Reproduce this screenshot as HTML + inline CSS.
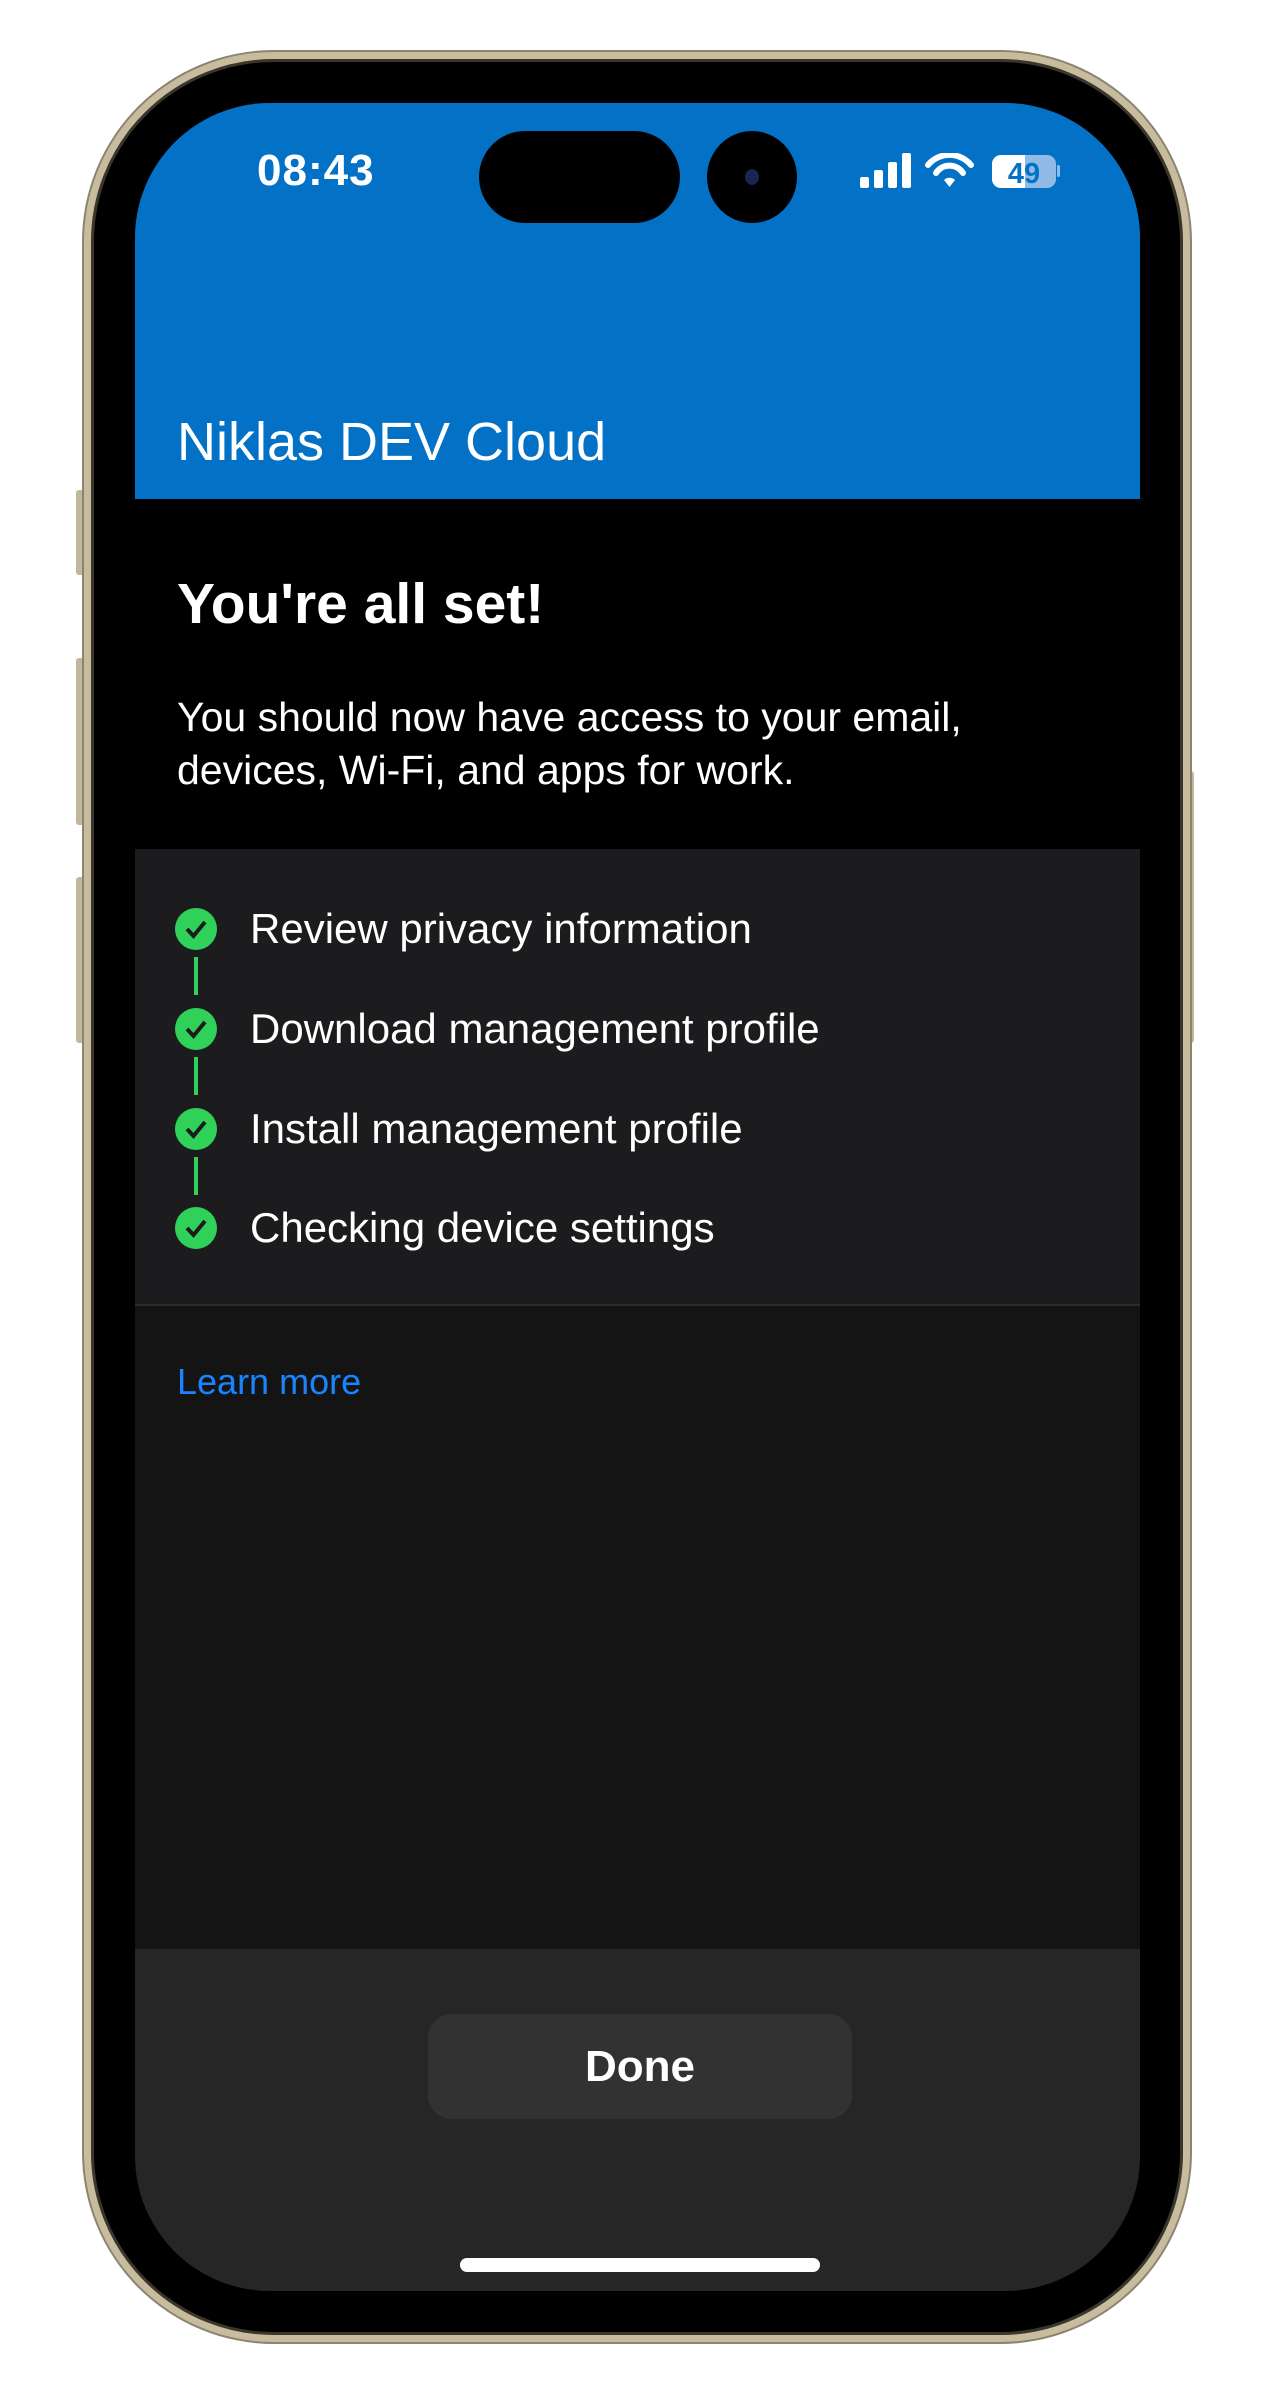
<!DOCTYPE html>
<html><head><meta charset="utf-8"><style>
*{margin:0;padding:0;box-sizing:border-box}
body{width:1270px;height:2383px;background:#fff;position:relative;overflow:hidden;font-family:"Liberation Sans",sans-serif}
.frame{position:absolute;left:84px;top:52px;width:1106px;height:2290px;border-radius:190px;background:#000;border:7px solid #c8bc9e;box-shadow:0 0 0 2px #8c8470,inset 0 0 0 3px #3a362c}
.btn{position:absolute;background:#c2b79b;border-radius:3px;width:8px}
.screen{position:absolute;left:135px;top:103px;width:1005px;height:2188px;border-radius:135px;overflow:hidden;background:#262626}
.hdr{position:absolute;left:0;top:0;width:100%;height:396px;background:#0372c6}
.time{position:absolute;left:122px;top:43px;color:#fff;font-size:44px;font-weight:bold;letter-spacing:1px}
.island{position:absolute;left:344px;top:28px;width:201px;height:92px;background:#000;border-radius:46px}
.cam{position:absolute;left:572px;top:28px;width:90px;height:92px;background:#000;border-radius:50%}
.cam:after{content:"";position:absolute;left:38px;top:38px;width:14px;height:16px;border-radius:50%;background:#1b2350}
.title{position:absolute;left:42px;top:304px;color:#fff;font-size:54px;line-height:70px}
.set{position:absolute;left:0;top:396px;width:100%;height:350px;background:#000}
.set h1{position:absolute;left:42px;top:72px;color:#fff;font-size:57px;font-weight:bold}
.set p{position:absolute;left:42px;top:192px;color:#fff;font-size:41px;line-height:53px;width:900px}
.list{position:absolute;left:0;top:746px;width:100%;height:457px;background:#1c1c1e;border-bottom:2px solid #2a2a2c}
.item{position:absolute;left:115px;color:#fff;font-size:42px;line-height:50px}
.chk{position:absolute;left:40px;width:42px;height:42px;border-radius:50%;background:#30d158}
.ln{position:absolute;left:59px;width:4px;height:38px;background:#30d158}
.lower{position:absolute;left:0;top:1203px;width:100%;height:643px;background:#141414}
.learn{position:absolute;left:42px;top:55px;color:#1a84ff;font-size:36px}
.done{position:absolute;left:293px;top:1911px;width:424px;height:105px;border-radius:24px;background:#323232;color:#fff;font-size:44px;font-weight:bold;text-align:center;line-height:105px}
.home{position:absolute;left:325px;top:2155px;width:360px;height:14px;border-radius:7px;background:#fff}
</style></head><body>
<div class="btn" style="left:76px;top:490px;height:85px"></div>
<div class="btn" style="left:76px;top:658px;height:167px"></div>
<div class="btn" style="left:76px;top:877px;height:166px"></div>
<div class="btn" style="left:1186px;top:771px;height:272px"></div>
<div class="frame"></div>
<div class="screen">
 <div class="hdr"></div>
 <div class="time">08:43</div>
 <div class="island"></div>
 <div class="cam"></div>
 <svg style="position:absolute;left:725px;top:50px" width="200" height="36" viewBox="0 0 200 36">
  <rect x="0" y="24" width="9" height="11" rx="2" fill="#fff"/>
  <rect x="14" y="17" width="9" height="18" rx="2" fill="#fff"/>
  <rect x="28" y="9" width="9" height="26" rx="2" fill="#fff"/>
  <rect x="42" y="0" width="9" height="35" rx="2" fill="#fff"/>
  <path d="M68 12 A28 28 0 0 1 111 12" stroke="#fff" stroke-width="6" fill="none" stroke-linecap="round"/>
  <path d="M76 20 A16 16 0 0 1 103 20" stroke="#fff" stroke-width="6" fill="none" stroke-linecap="round"/>
  <path d="M84 27 L89.5 34 L95 27 A8 8 0 0 0 84 27Z" fill="#fff"/>
  <rect x="132" y="2" width="64" height="33" rx="9" fill="#8fbbe6"/>
  <rect x="132" y="2" width="33" height="33" rx="9" fill="#fff"/>
  <rect x="155" y="2" width="10" height="33" fill="#fff"/>
  <rect x="197" y="12" width="3" height="12" rx="1.5" fill="#8fbbe6"/>
  <text x="164" y="30" text-anchor="middle" font-family="Liberation Sans" font-weight="bold" font-size="29" fill="#0372c6">49</text>
 </svg>
 <div class="title">Niklas DEV Cloud</div>
 <div class="set"><h1>You're all set!</h1><p>You should now have access to your email, devices, Wi-Fi, and apps for work.</p></div>
 <div class="list">
  <div class="chk" style="top:59px"><svg width="42" height="42"><path d="M12 21 L18.5 28 L30 14" stroke="#1c1c1e" stroke-width="4" fill="none"/></svg></div>
  <div class="ln" style="top:108px"></div>
  <div class="chk" style="top:159px"><svg width="42" height="42"><path d="M12 21 L18.5 28 L30 14" stroke="#1c1c1e" stroke-width="4" fill="none"/></svg></div>
  <div class="ln" style="top:208px"></div>
  <div class="chk" style="top:259px"><svg width="42" height="42"><path d="M12 21 L18.5 28 L30 14" stroke="#1c1c1e" stroke-width="4" fill="none"/></svg></div>
  <div class="ln" style="top:308px"></div>
  <div class="chk" style="top:358px"><svg width="42" height="42"><path d="M12 21 L18.5 28 L30 14" stroke="#1c1c1e" stroke-width="4" fill="none"/></svg></div>
  <div class="item" style="top:55px">Review privacy information</div>
  <div class="item" style="top:155px">Download management profile</div>
  <div class="item" style="top:255px">Install management profile</div>
  <div class="item" style="top:354px">Checking device settings</div>
 </div>
 <div class="lower"><div class="learn">Learn more</div></div>
 <div class="done">Done</div>
 <div class="home"></div>
</div>
</body></html>
